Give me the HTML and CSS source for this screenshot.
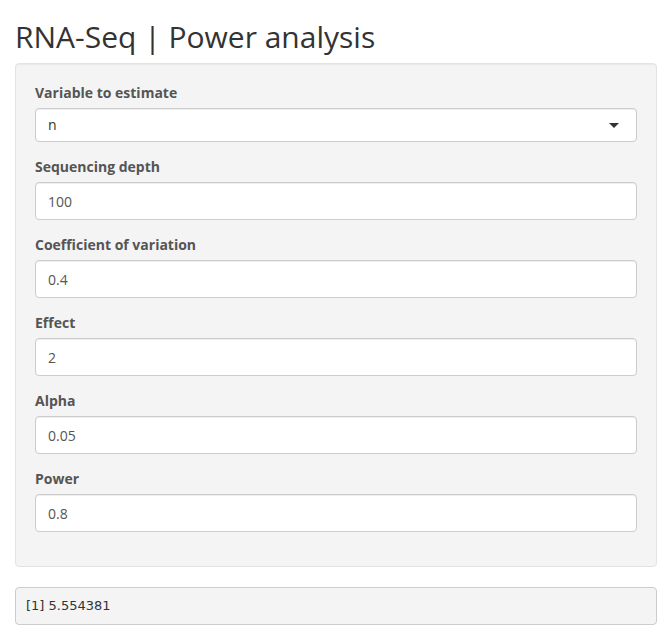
FILE: index.html
```html
<!DOCTYPE html>
<html>
<head>
<meta charset="utf-8">
<title>RNA-Seq | Power analysis</title>
<link rel="stylesheet" href="styles.css">
</head>
<body>
<div class="container">
  <h2 class="title">RNA-Seq | Power analysis</h2>
  <div class="well">
    <div class="form-group">
      <label class="control-label">Variable to estimate</label>
      <div class="select">
        <span class="select-value">n</span>
        <span class="caret"></span>
      </div>
    </div>
    <div class="form-group">
      <label class="control-label">Sequencing depth</label>
      <input class="form-control" type="text" value="100">
    </div>
    <div class="form-group">
      <label class="control-label">Coefficient of variation</label>
      <input class="form-control" type="text" value="0.4">
    </div>
    <div class="form-group">
      <label class="control-label">Effect</label>
      <input class="form-control" type="text" value="2">
    </div>
    <div class="form-group">
      <label class="control-label">Alpha</label>
      <input class="form-control" type="text" value="0.05">
    </div>
    <div class="form-group">
      <label class="control-label">Power</label>
      <input class="form-control" type="text" value="0.8">
    </div>
  </div>
  <pre class="output">[1] 5.554381</pre>
</div>
</body>
</html>
```
FILE: styles.css
```css
* { box-sizing: border-box; }
html, body {
  margin: 0;
  padding: 0;
  background: #fff;
  font-family: "Open Sans", "DejaVu Sans", sans-serif;
  font-size: 14px;
  line-height: 1.42857;
  color: #333;
}
.container {
  padding: 0 15px;
}
.title {
  margin: 20px 0 10px;
  font-size: 30px;
  font-weight: 400;
  line-height: 1.1;
  color: #333;
}
.well {
  background: #f4f4f4;
  border: 1px solid #e3e3e3;
  border-radius: 4px;
  box-shadow: inset 0 1px 1px rgba(0,0,0,0.05);
  padding: 19px;
  margin-bottom: 20px;
}
.form-group {
  margin-bottom: 15px;
}
.control-label {
  display: block;
  font-weight: 700;
  color: #555;
  margin-bottom: 5px;
  line-height: 20px;
}
.select {
  display: flex;
  align-items: center;
  justify-content: space-between;
  height: 34px;
  padding: 0 12px;
  background: #fff;
  border: 1px solid #ccc;
  border-radius: 4px;
  box-shadow: inset 0 1px 1px rgba(0,0,0,0.075);
  color: #333;
}
.select-value {
  font-size: 14px;
  line-height: 20px;
}
.caret {
  width: 0;
  height: 0;
  border-left: 5px solid transparent;
  border-right: 5px solid transparent;
  border-top: 5px solid #333;
  margin-right: 5px;
}
.form-control {
  display: block;
  width: 100%;
  height: 38px;
  padding: 6px 12px;
  font-family: "Open Sans", "DejaVu Sans", sans-serif;
  font-size: 14px;
  line-height: 1.5;
  color: #555;
  background: #fff;
  border: 1px solid #ccc;
  border-radius: 4px;
  box-shadow: inset 0 1px 1px rgba(0,0,0,0.075);
  outline: none;
}
.output {
  margin: 0;
  height: 38px;
  padding: 9px 10px;
  font-family: "DejaVu Sans", sans-serif;
  font-size: 13px;
  line-height: 18px;
  color: #333;
  background: #f4f4f4;
  border: 1px solid #ccc;
  border-radius: 4px;
}
```
